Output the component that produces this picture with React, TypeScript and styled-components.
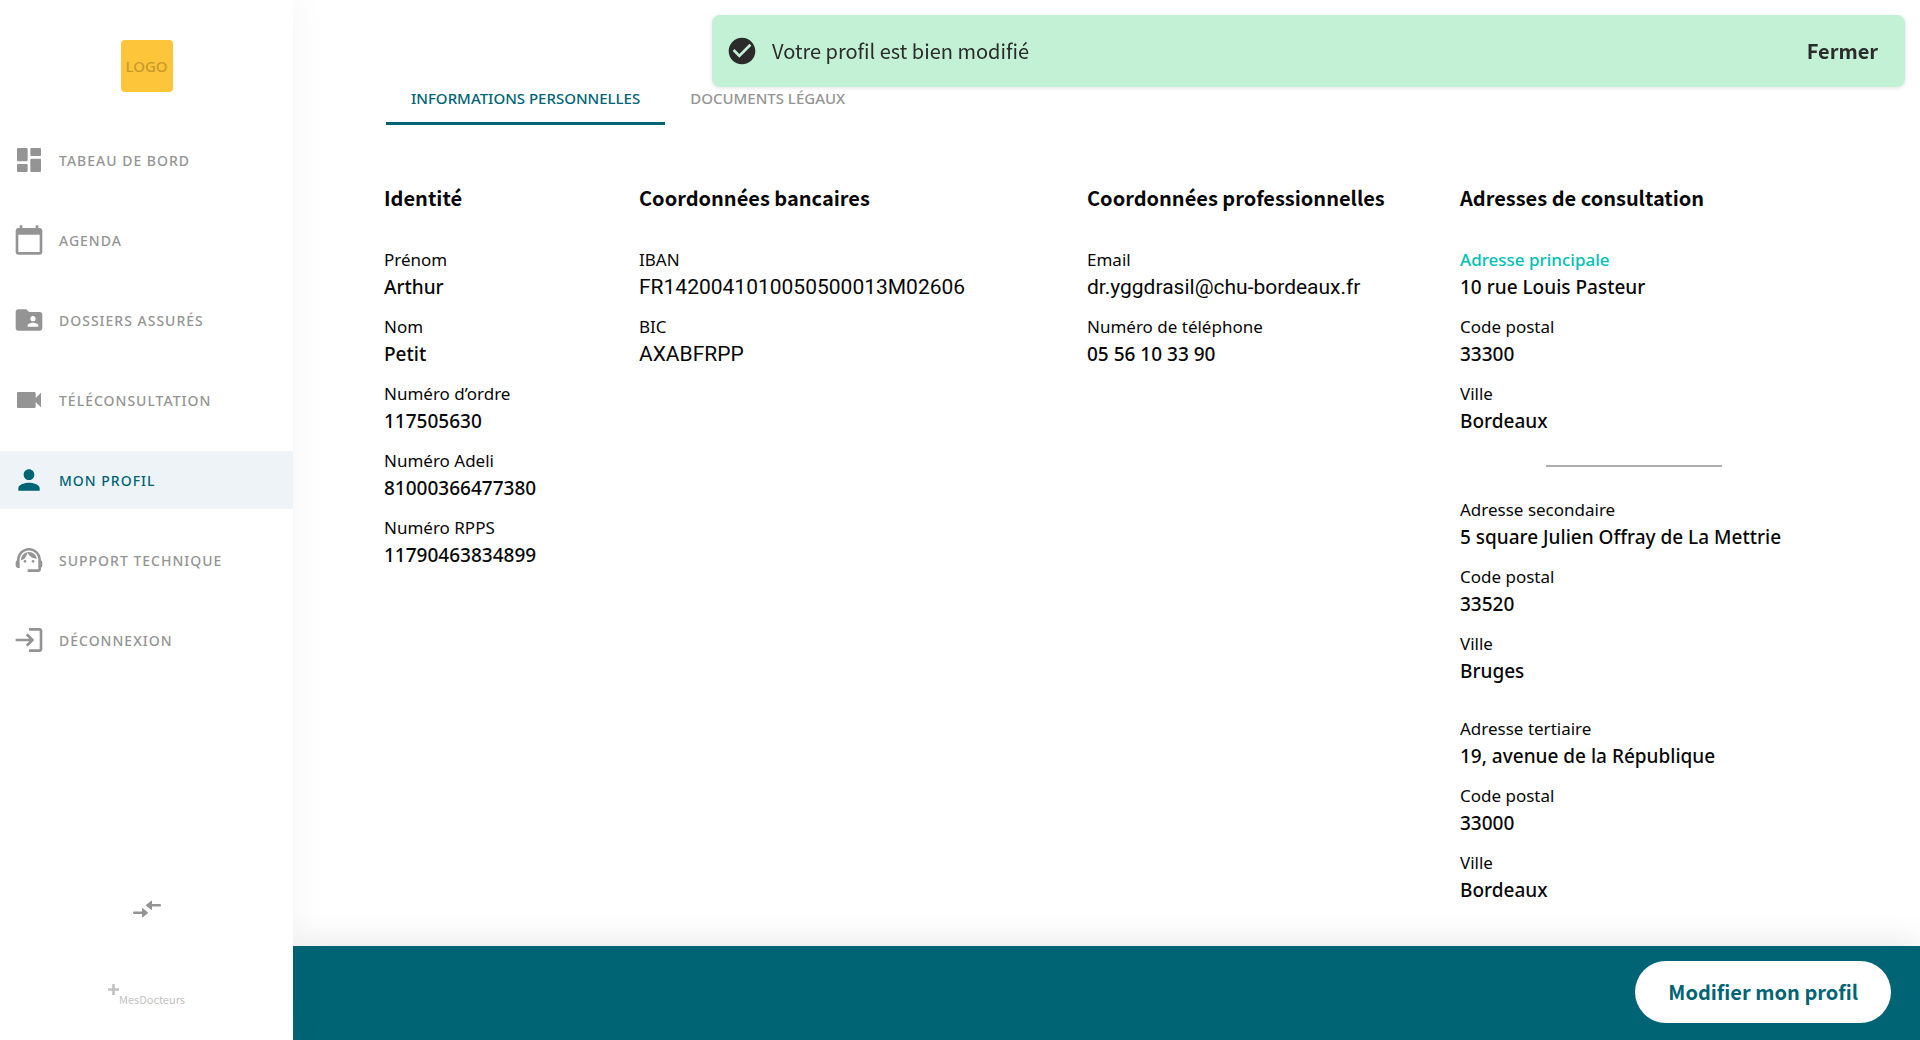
import React, { useState } from "react";
import styled, { createGlobalStyle } from "styled-components";
import {
  MdCalendarToday,
  MdVideocam,
  MdPerson,
  MdSupportAgent,
  MdLogin,
  MdFolderShared,
  MdCheckCircle,
} from "react-icons/md";

const color = {
  primary: "#006475",
  accent: "#00bfb3",
  muted: "#949494",
  text: "#080808",
  active: "#edf3f6",
};

const bodyFont = `"Noto Sans", "Open Sans", sans-serif`;
const titleFont = `"Noto Sans CJK JP", "Noto Sans", sans-serif`;
const dataFont = `Roboto, "Noto Sans", sans-serif`;

const GlobalStyle = createGlobalStyle`
  *, *::before, *::after { box-sizing: border-box; }
  body { margin: 0; background: #ffffff; color: ${color.text}; font-family: ${bodyFont}; }
  button { border: 0; padding: 0; background: none; cursor: pointer; }
`;

const Shell = styled.div`
  display: flex;
  min-height: 100vh;
`;

const Sidebar = styled.aside`
  display: flex;
  flex-direction: column;
  align-items: center;
  flex: 0 0 293px;
  padding: 40px 0 34px;
  background: #ffffff;
  box-shadow: 0 0 36px rgba(0, 0, 0, 0.05);
  z-index: 1;
`;

const Logo = styled.div`
  display: flex;
  align-items: center;
  justify-content: center;
  width: 52px;
  height: 52px;
  border-radius: 4px;
  background: #fdc53a;
  color: #c99a2a;
  font: 500 15px/20px ${bodyFont};
`;

const Nav = styled.nav`
  display: flex;
  flex-direction: column;
  gap: 22px;
  align-self: stretch;
  margin-top: 39px;
`;

const NavLink = styled.a<{ $active?: boolean }>`
  display: flex;
  align-items: center;
  gap: 14px;
  height: 58px;
  padding-left: 13px;
  background: ${(p) => (p.$active ? color.active : "transparent")};
  color: ${(p) => (p.$active ? color.primary : color.muted)};
  font: 500 14px/20px ${bodyFont};
  letter-spacing: 1px;
  text-decoration: none;
  text-transform: uppercase;

  svg {
    flex: none;
    width: 32px;
    height: 32px;
  }

  span {
    padding-top: 2px;
  }
`;

const CollapseButton = styled.button`
  display: flex;
  margin-top: auto;
  color: ${color.muted};
`;

const Brand = styled.div`
  display: flex;
  align-items: flex-start;
  margin-top: 66px;
  color: #c2c2c2;
  font: 400 11px/14px ${titleFont};

  span {
    padding-top: 8px;
  }
`;

const Main = styled.main`
  display: flex;
  flex: 1;
  flex-direction: column;
  min-width: 0;
`;

const Content = styled.div`
  flex: 1;
  padding: 71px 0 30px 91px;
`;

const Tabs = styled.div`
  display: flex;
  padding-left: 2px;
`;

const Tab = styled.button<{ $active?: boolean }>`
  height: 54px;
  padding: 2px 25px 0;
  border-bottom: 3px solid ${(p) => (p.$active ? color.primary : "transparent")};
  color: ${(p) => (p.$active ? color.primary : color.muted)};
  font: 500 15px/20px ${bodyFont};
  text-transform: uppercase;
`;

const Columns = styled.div`
  display: grid;
  grid-template-columns: 255fr 448fr 373fr 460fr;
  margin-top: 57px;
`;

const SectionTitle = styled.h2`
  margin: 0 0 32px;
  font: 700 20px/32px ${titleFont};
`;

const Fields = styled.dl`
  display: flex;
  flex-direction: column;
  gap: 11px;
  margin: 0;
`;

const Term = styled.dt<{ $accent?: boolean }>`
  color: ${(p) => (p.$accent ? color.accent : color.text)};
  font: ${(p) => (p.$accent ? 500 : 400)} 17px/27px ${bodyFont};
`;

const Value = styled.dd<{ $data?: boolean }>`
  margin: 0;
  font: ${(p) => (p.$data ? `400 21px/29px ${dataFont}` : `500 19px/29px ${bodyFont}`)};
`;

const Addresses = styled.div`
  display: flex;
  flex-direction: column;
  gap: 29px;
`;

const Divider = styled.hr`
  width: 176px;
  height: 2px;
  margin: 0 0 0 86px;
  border: 0;
  background: #adadad;
`;

const Footer = styled.footer`
  display: flex;
  align-items: center;
  justify-content: flex-end;
  height: 94px;
  padding: 0 29px 2px 0;
  background: ${color.primary};
  box-shadow: 0 0 36px rgba(0, 0, 0, 0.12);
`;

const EditButton = styled.button`
  height: 62px;
  padding: 0 33px;
  border-radius: 31px;
  background: #ffffff;
  color: ${color.primary};
  font: 700 20px/32px ${titleFont};
`;

const Toast = styled.div`
  position: fixed;
  top: 15px;
  right: 15px;
  left: 712px;
  display: flex;
  align-items: center;
  height: 72px;
  padding: 0 27px 0 14px;
  border-radius: 8px;
  background: #c3f1d5;
  box-shadow: 0 1px 4px rgba(0, 0, 0, 0.12);
  color: #2b2b2b;
  z-index: 2;

  svg {
    flex: none;
    width: 32px;
    height: 32px;
  }
`;

const ToastText = styled.p`
  flex: 1;
  margin: 0 0 0 14px;
  font: 400 20px/32px ${titleFont};
`;

const CloseButton = styled.button`
  color: inherit;
  font: 700 20px/32px ${titleFont};
`;

function DashboardIcon() {
  return (
    <svg viewBox="0 0 24 24" fill="currentColor" aria-hidden="true">
      <rect x="3" y="3" width="8" height="10" rx="0.800" />
      <rect x="3" y="15" width="8" height="6" rx="0.800" />
      <rect x="13" y="3" width="8" height="6" rx="0.800" />
      <rect x="13" y="11" width="8" height="10" rx="0.800" />
    </svg>
  );
}

const navItems = [
  { label: "Tabeau de bord", icon: <DashboardIcon /> },
  { label: "Agenda", icon: <MdCalendarToday /> },
  { label: "Dossiers assurés", icon: <MdFolderShared /> },
  { label: "Téléconsultation", icon: <MdVideocam /> },
  { label: "Mon profil", icon: <MdPerson />, active: true },
  { label: "Support technique", icon: <MdSupportAgent /> },
  { label: "Déconnexion", icon: <MdLogin /> },
];

type Field = { label: string; value: string; data?: boolean; accent?: boolean };

const identity: Field[] = [
  { label: "Prénom", value: "Arthur" },
  { label: "Nom", value: "Petit" },
  { label: "Numéro d’ordre", value: "117505630" },
  { label: "Numéro Adeli", value: "81000366477380" },
  { label: "Numéro RPPS", value: "11790463834899" },
];

const bank: Field[] = [
  { label: "IBAN", value: "FR1420041010050500013M02606", data: true },
  { label: "BIC", value: "AXABFRPP", data: true },
];

const contact: Field[] = [
  { label: "Email", value: "dr.yggdrasil@chu-bordeaux.fr", data: true },
  { label: "Numéro de téléphone", value: "05 56 10 33 90" },
];

const mainAddress: Field[] = [
  { label: "Adresse principale", value: "10 rue Louis Pasteur", accent: true },
  { label: "Code postal", value: "33300" },
  { label: "Ville", value: "Bordeaux" },
];

const secondAddress: Field[] = [
  { label: "Adresse secondaire", value: "5 square Julien Offray de La Mettrie" },
  { label: "Code postal", value: "33520" },
  { label: "Ville", value: "Bruges" },
];

const thirdAddress: Field[] = [
  { label: "Adresse tertiaire", value: "19, avenue de la République" },
  { label: "Code postal", value: "33000" },
  { label: "Ville", value: "Bordeaux" },
];

function FieldList({ items }: { items: Field[] }) {
  return (
    <Fields>
      {items.map((f) => (
        <div key={f.label}>
          <Term $accent={f.accent}>{f.label}</Term>
          <Value $data={f.data}>{f.value}</Value>
        </div>
      ))}
    </Fields>
  );
}

export default function App() {
  const [toastOpen, setToastOpen] = useState(true);

  return (
    <>
      <GlobalStyle />
      <Shell>
        <Sidebar>
          <Logo>LOGO</Logo>
          <Nav>
            {navItems.map((item) => (
              <NavLink
                key={item.label}
                href="#"
                $active={item.active}
                aria-current={item.active ? "page" : undefined}
              >
                {item.icon}
                <span>{item.label}</span>
              </NavLink>
            ))}
          </Nav>
          <CollapseButton aria-label="Réduire le menu">
            <svg width="28" height="18" viewBox="0 0 28 18" fill="currentColor">
              <path d="M27 4h-8V1.200q0-1-.8-.4L13.300 4.700q-.6.600 0 1.200l4.900 3.800q.8.600.8-.4V6.500h8q1 0 1-1.250T27 4z" />
              <path d="M1 11.500h8V8.700q0-1 .8-.4l4.900 3.900q.6.600 0 1.200l-4.900 3.800q-.8.600-.8-.4V14H1q-1 0-1-1.250T1 11.500z" />
            </svg>
          </CollapseButton>
          <Brand>
            <svg width="11" height="11" viewBox="0 0 11 11" aria-hidden="true">
              <path d="M5.500 0v11M0 5.500h11" stroke="currentColor" strokeWidth="2.600" />
            </svg>
            <span>MesDocteurs</span>
          </Brand>
        </Sidebar>

        <Main>
          <Content>
            <Tabs role="tablist">
              <Tab role="tab" aria-selected="true" $active>
                Informations personnelles
              </Tab>
              <Tab role="tab" aria-selected="false">
                Documents légaux
              </Tab>
            </Tabs>
            <Columns>
              <section>
                <SectionTitle>Identité</SectionTitle>
                <FieldList items={identity} />
              </section>
              <section>
                <SectionTitle>Coordonnées bancaires</SectionTitle>
                <FieldList items={bank} />
              </section>
              <section>
                <SectionTitle>Coordonnées professionnelles</SectionTitle>
                <FieldList items={contact} />
              </section>
              <section>
                <SectionTitle>Adresses de consultation</SectionTitle>
                <Addresses>
                  <FieldList items={mainAddress} />
                  <Divider />
                  <FieldList items={secondAddress} />
                  <FieldList items={thirdAddress} />
                </Addresses>
              </section>
            </Columns>
          </Content>
          <Footer>
            <EditButton>Modifier mon profil</EditButton>
          </Footer>
        </Main>
      </Shell>

      {toastOpen && (
        <Toast role="status">
          <MdCheckCircle />
          <ToastText>Votre profil est bien modifié</ToastText>
          <CloseButton onClick={() => setToastOpen(false)}>Fermer</CloseButton>
        </Toast>
      )}
    </>
  );
}
